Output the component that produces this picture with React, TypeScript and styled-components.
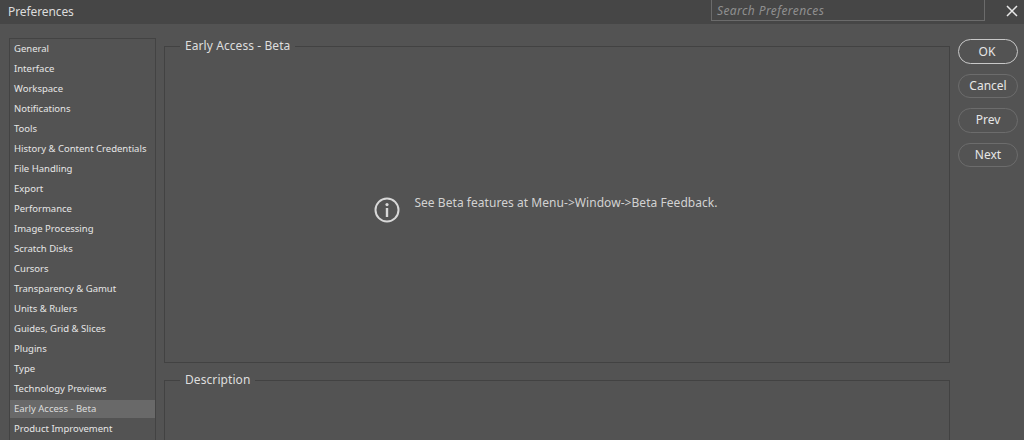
import React from "react";
import styled, { createGlobalStyle } from "styled-components";

const Global = createGlobalStyle`
  html, body { margin: 0; padding: 0; background: #535353; overflow: hidden; }
  #root { width: 1024px; height: 440px; }
`;
const FONT = `"Noto Sans", "Open Sans", "Liberation Sans", sans-serif`;

const Windowed = styled.div`
  width: 1024px; height: 440px; overflow: hidden; display: flex; flex-direction: column;
  background: #535353; font-family: ${FONT}; color: #e4e4e4;
`;
const TitleBar = styled.header`
  height: 24px; flex: none; background: #464646; display: flex; align-items: flex-start;
  padding-left: 8px; position: relative;
`;
const Title = styled.div`
  font-size: 12px; line-height: 24px; color: #dcdcdc; flex: 1; letter-spacing: -0.1px;
`;
const Search = styled.div`
  box-sizing: border-box; width: 274px; height: 21px; margin-right: 39px; border: 1px solid #6b6b6b; border-top: none;
  font-size: 12px; font-style: italic; color: #8f8f8f; padding-left: 5px; line-height: 21px; letter-spacing: 0.4px;
`;
const Close = styled.svg`
  position: absolute; right: 5px; top: 4px; width: 14px; height: 14px;
`;
const Body = styled.div`
  flex: 1; display: flex; padding: 14px 6px 0 9px; gap: 8px; min-height: 0;
`;
const Sidebar = styled.nav`
  width: 145px; flex: none; border: 1px solid #434343; border-bottom: none; height: 500px;
`;
const Item = styled.div<{ $active?: boolean }>`
  font-size: 9.5px; padding-left: 4px; white-space: nowrap;
  color: ${(p) => (p.$active ? "#dcdcdc" : "#e6e6e6")};
  background: ${(p) => (p.$active ? "#696969" : "transparent")};
  height: ${(p) => (p.$active ? "18px" : "20px")};
  margin: ${(p) => (p.$active ? "1px 0" : "0")};
  line-height: ${(p) => (p.$active ? "18px" : "20px")};
`;
const Center = styled.main`
  width: 786px; flex: none; display: flex; flex-direction: column; gap: 9px;
`;
const Group = styled.fieldset<{ $h: number }>`
  margin: 0; padding: 0; min-width: 0; box-sizing: border-box; width: 786px; height: ${(p) => p.$h}px;
  border: 1px solid #424242; flex: none;
`;
const Legend = styled.legend`
  margin-left: 15px; padding: 0 5px; font-size: 12px; line-height: 16px; color: #dedede; letter-spacing: 0.08px;
`;
const GroupContent = styled.div`
  height: 300px; display: flex; align-items: center; justify-content: center;
`;
const Notice = styled.div`
  display: flex; align-items: flex-start; gap: 14px;
  position: relative; top: 6px; left: -11px;
`;
const NoticeText = styled.div`
  font-size: 12px; color: #d2d2d2; line-height: 16px; letter-spacing: 0.05px; margin-top: -2px; white-space: nowrap;
`;
const Actions = styled.aside`
  width: 60px; flex: none; display: flex; flex-direction: column; gap: 10px; margin-top: 1px;
`;
const Btn = styled.button<{ $primary?: boolean }>`
  width: 60px; height: 24.5px; box-sizing: border-box; border-radius: 13px; background: transparent;
  padding: ${(p) => (p.$primary ? "1px 2px 0 0" : "0 0 1px")};
  border: ${(p) => (p.$primary ? "1.5px solid #c8c8c8" : "1px solid #6c6c6c")};
  color: #e6e6e6; font-family: ${FONT}; font-size: 12px;
`;

const items = [
  "General", "Interface", "Workspace", "Notifications", "Tools", "History & Content Credentials",
  "File Handling", "Export", "Performance", "Image Processing", "Scratch Disks", "Cursors",
  "Transparency & Gamut", "Units & Rulers", "Guides, Grid & Slices", "Plugins", "Type",
  "Technology Previews", "Early Access - Beta", "Product Improvement",
];

export default function App() {
  return (
    <Windowed>
      <Global />
      <TitleBar>
        <Title>Preferences</Title>
        <Search>Search Preferences</Search>
        <Close viewBox="0 0 14 14"><path d="M2 2 L12 12 M12 2 L2 12" stroke="#e8e8e8" strokeWidth="1.5" fill="none" /></Close>
      </TitleBar>
      <Body>
        <Sidebar>
          {items.map((t) => <Item key={t} $active={t === "Early Access - Beta"}>{t}</Item>)}
        </Sidebar>
        <Center>
          <Group $h={325}>
            <Legend>Early Access - Beta</Legend>
            <GroupContent>
              <Notice>
                <svg width="26" height="26" viewBox="0 0 26 26" fill="none">
                  <circle cx="13" cy="13" r="11.5" stroke="#d8d8d8" strokeWidth="2" />
                  <circle cx="13" cy="7.6" r="1.6" fill="#d8d8d8" />
                  <rect x="11.8" y="11" width="2.4" height="9" fill="#d8d8d8" />
                </svg>
                <NoticeText>See Beta features at Menu-&gt;Window-&gt;Beta Feedback.</NoticeText>
              </Notice>
            </GroupContent>
          </Group>
          <Group $h={200}>
            <Legend>Description</Legend>
          </Group>
        </Center>
        <Actions>
          <Btn $primary>OK</Btn>
          <Btn>Cancel</Btn>
          <Btn>Prev</Btn>
          <Btn>Next</Btn>
        </Actions>
      </Body>
    </Windowed>
  );
}
